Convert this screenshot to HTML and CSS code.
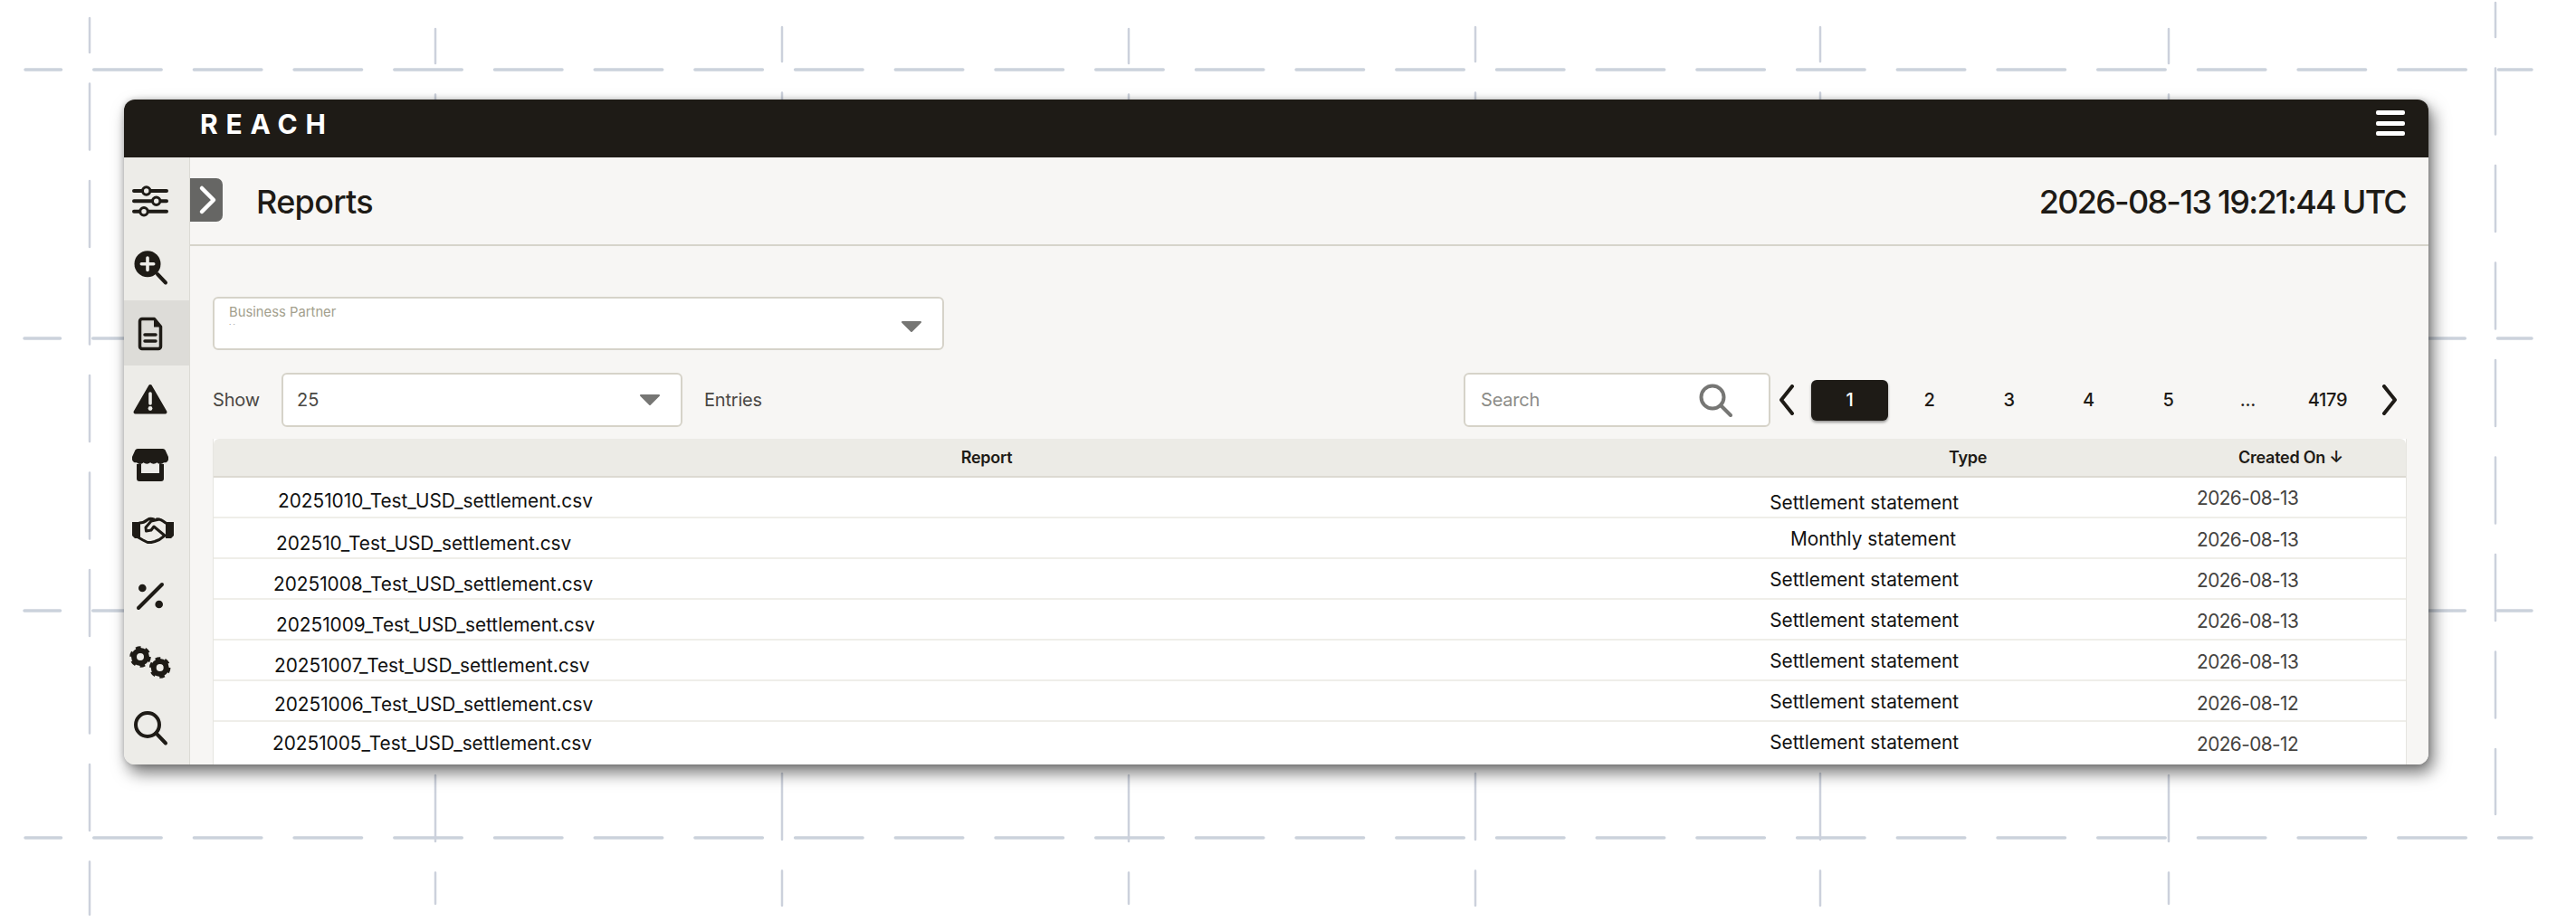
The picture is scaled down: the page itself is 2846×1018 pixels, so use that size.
FILE: index.html
```html
<!DOCTYPE html>
<html lang="en">
<head>
<meta charset="utf-8">
<title>Reports</title>
<link rel="stylesheet" href="styles.css">
</head>
<body>
<svg class="backdrop" width="2846" height="1018" viewBox="0 0 2846 1018" aria-hidden="true">
  <g class="hline">
    <line x1="28" y1="77" x2="2797" y2="77"/>
    <line x1="27" y1="374" x2="2797" y2="374"/>
    <line x1="27" y1="675" x2="2797" y2="675"/>
    <line x1="28" y1="926" x2="2797" y2="926"/>
  </g>
  <g class="vline">
    <line x1="99" y1="20" x2="99" y2="1011"/>
    <line x1="481" y1="32" x2="481" y2="999"/>
    <line x1="864" y1="30" x2="864" y2="1001"/>
    <line x1="1247" y1="32" x2="1247" y2="999"/>
    <line x1="1630" y1="30" x2="1630" y2="1001"/>
    <line x1="2011" y1="30" x2="2011" y2="1001"/>
    <line x1="2396" y1="32" x2="2396" y2="999"/>
    <line x1="2757" y1="3" x2="2757" y2="900"/>
  </g>
</svg>

<div class="window">
  <header class="topbar">
    <div class="brand">REACH</div>
    <div class="burger"><span></span><span></span><span></span></div>
  </header>
  <div class="shell">
    <nav class="sidebar">
      <div class="nav-item">
        <svg class="ico" viewBox="0 0 40 40"><g class="st"><path d="M2 9H38M2 20.3H38M2 31.7H38"/></g><g class="knob"><circle cx="15.7" cy="9" r="4.2"/><circle cx="26.7" cy="20.3" r="4.2"/><circle cx="13" cy="31.7" r="4.2"/></g></svg>
      </div>
      <div class="nav-item">
        <svg class="ico" viewBox="0 0 40 40"><circle class="fl" cx="17" cy="16.7" r="14.5"/><path class="st" d="M28 28L37 37.5"/><path class="cut" d="M17 10V23.4M10.3 16.7H23.7"/></svg>
      </div>
      <div class="nav-item active">
        <svg class="ico" viewBox="0 0 40 40"><path class="st st3" d="M11 4.500H24.500L31.500 13V35a2.500 2.500 0 0 1-2.500 2.500H11a2.500 2.500 0 0 1-2.500-2.500V7a2.500 2.500 0 0 1 2.500-2.500Z"/><path class="fl" d="M24 4L32 13.500H24Z"/><path class="st st3" d="M14 22H26M14 29H26"/></svg>
      </div>
      <div class="nav-item">
        <svg class="ico" viewBox="0 0 40 40"><path class="fl tri" d="M20 6L36.500 34.500H3.500Z"/><path class="cut" d="M20 14V25"/><circle class="dot" cx="20" cy="30.500" r="2.400"/></svg>
      </div>
      <div class="nav-item">
        <svg class="ico" viewBox="0 0 40 40"><path class="fl" d="M6 3H34a3 3 0 0 1 2.600 1.600L40 12v3a4 4 0 0 1-5 3.200 5 5 0 0 1-7.500 0 5.500 5.500 0 0 1-7.500 0 5.500 5.500 0 0 1-7.500 0 5 5 0 0 1-7.500 0A4 4 0 0 1 0 15V12L3.400 4.600A3 3 0 0 1 6 3Z"/><path class="fl" d="M5 20H10V30H30V20H35V36a3 3 0 0 1-3 3H8a3 3 0 0 1-3-3Z"/></svg>
      </div>
      <div class="nav-item">
        <svg class="ico hand" viewBox="0 0 46 30"><path class="fl" d="M0 6H9V24H3L0 21ZM46 6H37V24H43L46 21Z"/><path class="st hs" d="M8 7C12 7 14 6 17 3.500C19 2 21 2 24 3M27 3C30 2 33 4 37 7M30 3L21 5L15 12L15.500 16L21 15L24 11L36 21M5 22L12 26L17 28.500L21 28.500L25 27.500L30 25.500L36 21"/></svg>
      </div>
      <div class="nav-item">
        <svg class="ico" viewBox="0 0 40 40"><path class="st" d="M7 33L33 7"/><circle class="fl" cx="11.300" cy="11" r="4.300"/><circle class="fl" cx="29.700" cy="29" r="4.300"/></svg>
      </div>
      <div class="nav-item">
        <svg class="ico wide" viewBox="0 0 46 40"><g class="gear"><circle class="ring" cx="11" cy="14" r="7"/><circle class="teeth" cx="11" cy="14" r="10"/><circle class="ring" cx="32.700" cy="26" r="7"/><circle class="teeth" cx="32.700" cy="26" r="10"/></g></svg>
      </div>
      <div class="nav-item">
        <svg class="ico" viewBox="0 0 40 40"><circle class="st" cx="17" cy="17" r="13"/><path class="st" d="M27 27L37 37.500"/></svg>
      </div>
    </nav>

    <main class="main">
      <div class="titlebar">
        <button class="toggle" type="button"><svg viewBox="0 0 36 48" width="36" height="48"><path d="M13 11L26 24L13 37"/></svg></button>
        <h1 class="title">Reports</h1>
        <div class="clock">2026-08-13 19:21:44 UTC</div>
      </div>
      <div class="panel">
        <div class="partner">
          <span class="partner-label">Business Partner</span>
          <span class="partner-value">· ·</span>
          <svg class="caret caret-bp" viewBox="0 0 24 14"><path d="M2 2H22L12 12Z"/></svg>
        </div>
        <div class="controls">
          <span class="show">Show</span>
          <div class="select"><span>25</span><svg class="caret" viewBox="0 0 24 14"><path d="M2 2H22L12 12Z"/></svg></div>
          <span class="entries">Entries</span>
          <div class="search">
            <span class="placeholder">Search</span>
            <svg class="search-ico" viewBox="0 0 38 38"><circle cx="16" cy="16" r="12.500"/><path d="M25 25L36 36"/></svg>
          </div>
          <div class="pager">
            <svg class="chev" viewBox="0 0 18 34"><path d="M15 2L3 17L15 32"/></svg>
            <span class="page current">1</span>
            <span class="page">2</span>
            <span class="page">3</span>
            <span class="page">4</span>
            <span class="page">5</span>
            <span class="page">...</span>
            <span class="page">4179</span>
            <svg class="chev" viewBox="0 0 18 34"><path d="M3 2L15 17L3 32"/></svg>
          </div>
        </div>
        <div class="table">
          <div class="thead">
            <span>Report</span><span>Type</span><span>Created On ↓</span>
          </div>
          <div class="row"><span class="file">20251010_Test_USD_settlement.csv</span><span class="type">Settlement statement</span><span class="date">2026-08-13</span></div>
          <div class="row"><span class="file">202510_Test_USD_settlement.csv</span><span class="type">Monthly statement</span><span class="date">2026-08-13</span></div>
          <div class="row"><span class="file">20251008_Test_USD_settlement.csv</span><span class="type">Settlement statement</span><span class="date">2026-08-13</span></div>
          <div class="row"><span class="file">20251009_Test_USD_settlement.csv</span><span class="type">Settlement statement</span><span class="date">2026-08-13</span></div>
          <div class="row"><span class="file">20251007_Test_USD_settlement.csv</span><span class="type">Settlement statement</span><span class="date">2026-08-13</span></div>
          <div class="row"><span class="file">20251006_Test_USD_settlement.csv</span><span class="type">Settlement statement</span><span class="date">2026-08-12</span></div>
          <div class="row"><span class="file">20251005_Test_USD_settlement.csv</span><span class="type">Settlement statement</span><span class="date">2026-08-12</span></div>
        </div>
      </div>
    </main>
  </div>
</div>
</body>
</html>
```
FILE: styles.css
```css
* { box-sizing: border-box; }
html, body { margin: 0; padding: 0; }
body {
  width: 2846px;
  height: 1018px;
  background: #fff;
  font-family: Inter, "Liberation Sans", sans-serif;
  color: #1e1b16;
  overflow: hidden;
  padding: 110px 0 0 137px;
}

/* decorative dashes behind the window */
.backdrop { position: absolute; left: 0; top: 0; }
.hline line { stroke: #cbd2dc; stroke-width: 3.5; stroke-linecap: round; stroke-dasharray: 74.5 36.2; stroke-dashoffset: 35; }
.vline line { stroke: #ccd1dc; stroke-width: 2.5; stroke-linecap: round; stroke-dasharray: 73 34.5; stroke-dashoffset: 35; }

.window {
  position: relative;
  width: 2546px;
  height: 735px;
  border-radius: 12px;
  box-shadow: 5px 9px 18px rgba(0, 0, 0, .55), 0 0 6px rgba(0, 0, 0, .2);
  background: #f7f6f4;
  display: flex;
  flex-direction: column;
}

/* top bar */
.topbar {
  height: 64px;
  flex: none;
  background: #1e1b16;
  border-radius: 12px 12px 0 0;
  display: flex;
  align-items: center;
  justify-content: space-between;
  padding: 0 26px 0 84px;
}
.brand { color: #fff; font-size: 30px; font-weight: 700; letter-spacing: 8.8px; line-height: 1; margin-top: -10px; }
.burger { width: 32px; display: flex; flex-direction: column; gap: 6.5px; margin-top: -12px; }
.burger span { height: 5px; border-radius: 2px; background: #fff; }

.shell { flex: 1; display: flex; min-height: 0; }

/* sidebar */
.sidebar {
  width: 73px;
  flex: none;
  background: #edece8;
  border-right: 1px solid #dcdbd5;
  border-radius: 0 0 0 12px;
  padding-top: 12px;
}
.nav-item { height: 72.75px; display: flex; align-items: center; padding-left: 9px; }
.nav-item.active { background: #dddcd8; }
.ico { width: 40px; height: 40px; display: block; overflow: visible; }
.ico.hand { width: 46px; height: 30px; }
.ico.wide { width: 46px; height: 40px; margin-left: -2px; }
.st { fill: none; stroke: #1e1b16; stroke-width: 4; stroke-linecap: round; stroke-linejoin: round; }
.st3 { stroke-width: 3.5; }
.hs { stroke-width: 3; }
.fl { fill: #1e1b16; }
.tri { stroke: #1e1b16; stroke-width: 4; stroke-linejoin: round; }
.cut { fill: none; stroke: #edece8; stroke-width: 3.6; stroke-linecap: round; }
.dot { fill: #edece8; }
.knob circle { fill: #edece8; stroke: #1e1b16; stroke-width: 3; }
.gear .ring { fill: none; stroke: #1e1b16; stroke-width: 6; }
.gear .teeth { fill: none; stroke: #1e1b16; stroke-width: 3.5; stroke-dasharray: 5.5 4.97; }

/* main */
.main { flex: 1; min-width: 0; display: flex; flex-direction: column; background: #f7f6f4; border-radius: 0 0 12px 0; }
.titlebar {
  height: 98px;
  flex: none;
  display: flex;
  align-items: center;
  border-bottom: 2px solid #d6d4cb;
  padding: 0 25px 0 0;
}
.toggle {
  width: 36px;
  height: 48px;
  padding: 0;
  border: 0;
  background: #666664;
  border-radius: 0 7px 7px 0;
  display: block;
  margin-top: -3px;
}
.toggle svg { display: block; }
.toggle path { fill: none; stroke: #fff; stroke-width: 4.5; stroke-linecap: round; stroke-linejoin: round; }
.title { margin: 2px 0 0 37px; font-size: 36px; font-weight: 450; letter-spacing: -.7px; flex: 1; line-height: 1; }
.clock { font-size: 36px; font-weight: 450; letter-spacing: -1.75px; line-height: 1; margin-top: 2px; }

.panel { flex: 1; min-height: 0; padding: 56px 25px 0 25px; }

.partner {
  position: relative;
  width: 808px;
  height: 59px;
  background: #fff;
  border: 2px solid #d6d3c9;
  border-radius: 6px;
  padding: 6px 0 0 16px;
}
.partner-label { display: block; font-size: 14.8px; line-height: 18px; color: #a3a08d; }
.partner-value { display: block; font-size: 8px; line-height: 8px; color: #8a8a86; }
.caret { width: 24px; height: 14px; display: block; }
.caret path { fill: #767674; stroke: #767674; stroke-width: 2; stroke-linejoin: round; }
.caret-bp { position: absolute; right: 22px; top: 24px; }

.controls { display: flex; align-items: center; height: 60px; margin-top: 25px; }
.show { width: 76px; font-size: 20px; color: #4a4844; letter-spacing: -.2px; }
.select {
  width: 443px;
  height: 60px;
  background: #fff;
  border: 2px solid #d6d3c9;
  border-radius: 6px;
  display: flex;
  align-items: center;
  justify-content: space-between;
  padding: 0 22px 0 15px;
  font-size: 20px;
  color: #4a4844;
}
.entries { margin-left: 24px; font-size: 20px; color: #4a4844; letter-spacing: -.2px; }
.search {
  margin-left: auto;
  width: 339px;
  height: 60px;
  background: #fff;
  border: 2px solid #d6d3c9;
  border-radius: 6px;
  display: flex;
  align-items: center;
  justify-content: space-between;
  padding: 0 40px 0 17px;
}
.placeholder { font-size: 20px; color: #8c8c88; letter-spacing: -.2px; }
.search-ico { width: 38px; height: 38px; display: block; }
.search-ico circle, .search-ico path { fill: none; stroke: #767674; stroke-width: 4; stroke-linecap: round; }
.pager { display: flex; align-items: center; margin-left: 9px; width: 693px; }
.chev { width: 18px; height: 34px; flex: none; display: block; }
.chev path { fill: none; stroke: #1e1b16; stroke-width: 4; stroke-linecap: round; stroke-linejoin: round; }
.page { width: 85px; height: 45px; margin-right: 3px; display: flex; align-items: center; justify-content: center; font-size: 20px; font-weight: 500; letter-spacing: -.3px; }
.page.current { background: #1e1b16; color: #fff; border-radius: 6px; box-shadow: 0 2px 3px rgba(0, 0, 0, .4); }
.pager .chev:first-child { margin-right: 18px; }
.pager .chev:last-child { margin-left: 14px; }

.table { margin-top: 13px; width: 2424px; background: #fff; border-left: 1px solid #e6e5e0; border-right: 1px solid #e6e5e0; }
.thead, .row { display: grid; grid-template-columns: 1708px 460px 1fr; }
.thead {
  height: 43px;
  background: #ecebe6;
  border-bottom: 2px solid #dcdad2;
  border-radius: 6px 6px 0 0;
  align-items: center;
  text-align: center;
  font-size: 18px;
  font-weight: 600;
  letter-spacing: -.25px;
}
.row { height: 45px; padding-top: 2px; border-bottom: 2px solid #efeee9; font-size: 20.8px; line-height: 24px; color: #111; }
.row:last-child { height: 47px; border-bottom: 0; }
.file { padding: 12px 0 0 71px; }
.type { text-align: right; padding: 9px 240px 0 0; }
.date { padding: 10px 0 0 23px; color: #45433f; letter-spacing: -.55px; }

/* the rows of the source sit slightly out of line with each other */
.row:nth-child(2) .type { padding-top: 14px; }
.row:nth-child(2) .date { padding-top: 9px; }
.row:nth-child(3) .file { padding: 14px 0 0 69px; }
.row:nth-child(3) .type { padding-right: 243px; }
.row:nth-child(4) .file { padding: 14px 0 0 66px; }
.row:nth-child(5) .file { padding: 14px 0 0 69px; }
.row:nth-child(6) .file { padding: 14px 0 0 67px; }
.row:nth-child(7) .file { padding: 12px 0 0 67px; }
.row:nth-child(8) .file { padding: 10px 0 0 65px; }
.row:nth-child(7) .date, .row:nth-child(8) .date { padding-top: 11px; }
```
